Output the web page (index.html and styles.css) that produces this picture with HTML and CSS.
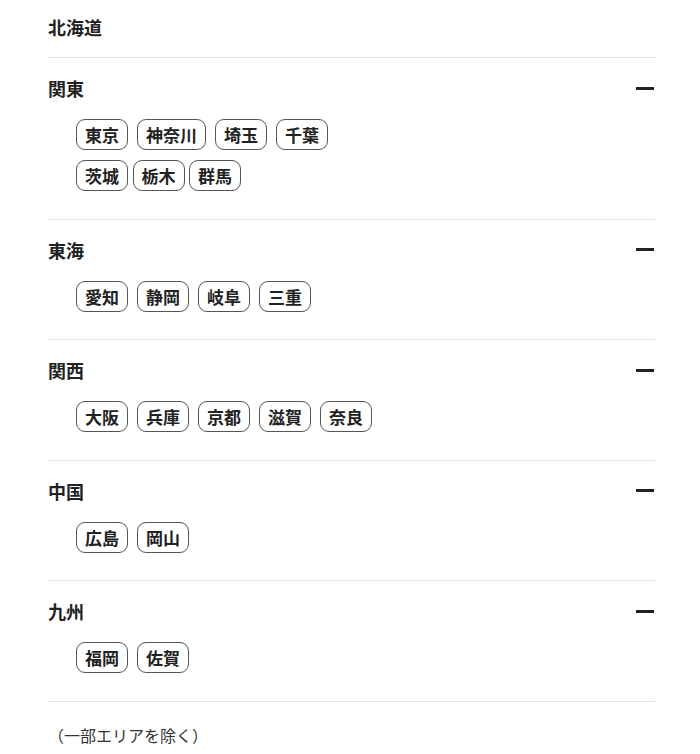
FILE: index.html
```html
<!DOCTYPE html>
<html lang="ja">
<head>
    <meta charset="UTF-8">
    <meta name="viewport" content="width=device-width, initial-scale=1.0">
    <title>対応エリア</title>
    <link rel="stylesheet" href="styles.css">
</head>
<body>
    <div class="area-list">
        <!-- 北海道 has no sub list -->
        <div class="area area-single">
            <div class="area-head">
                <span class="area-name">北海道</span>
            </div>
        </div>

        <div class="area">
            <div class="area-head">
                <span class="area-name">関東</span>
                <span class="toggle"></span>
            </div>
            <div class="prefs">
                <span class="pref">東京</span>
                <span class="pref">神奈川</span>
                <span class="pref">埼玉</span>
                <span class="pref">千葉</span>
            </div>
            <div class="prefs prefs-tight">
                <span class="pref">茨城</span>
                <span class="pref">栃木</span>
                <span class="pref">群馬</span>
            </div>
        </div>

        <div class="area">
            <div class="area-head">
                <span class="area-name">東海</span>
                <span class="toggle"></span>
            </div>
            <div class="prefs">
                <span class="pref">愛知</span>
                <span class="pref">静岡</span>
                <span class="pref">岐阜</span>
                <span class="pref">三重</span>
            </div>
        </div>

        <div class="area">
            <div class="area-head">
                <span class="area-name">関西</span>
                <span class="toggle"></span>
            </div>
            <div class="prefs">
                <span class="pref">大阪</span>
                <span class="pref">兵庫</span>
                <span class="pref">京都</span>
                <span class="pref">滋賀</span>
                <span class="pref">奈良</span>
            </div>
        </div>

        <div class="area">
            <div class="area-head">
                <span class="area-name">中国</span>
                <span class="toggle"></span>
            </div>
            <div class="prefs">
                <span class="pref">広島</span>
                <span class="pref">岡山</span>
            </div>
        </div>

        <div class="area">
            <div class="area-head">
                <span class="area-name">九州</span>
                <span class="toggle"></span>
            </div>
            <div class="prefs">
                <span class="pref">福岡</span>
                <span class="pref">佐賀</span>
            </div>
        </div>

        <p class="note">（一部エリアを除く）</p>
    </div>
</body>
</html>
```

FILE: styles.css
```css
/* Basic page styling */
body {
    margin: 0;
    font-family: "Noto Sans CJK JP", "Noto Sans", sans-serif;
    color: #222;
    background: #fff;
}

.area-list {
    margin: 0 45px 0 48px;
}

/* One region block */
.area {
    padding: 17px 0 27.5px;
    border-bottom: 1px solid #e2e2e2;
}

.area-single {
    padding: 14px 0 17px;
}

.area-head {
    display: flex;
    align-items: center;
    justify-content: space-between;
    height: 26px;
}

.area-name {
    font-size: 18px;
    font-weight: bold;
    line-height: 26px;
}

/* Minus sign for an open region */
.toggle {
    width: 18px;
    height: 3px;
    margin-right: 1px;
    background: #222;
}

/* Prefecture chips */
.prefs {
    display: flex;
    flex-wrap: wrap;
    gap: 9px;
    margin: 18px 0 0 28px;
}

.prefs + .prefs {
    margin-top: 10px;
}

.prefs-tight {
    gap: 4.5px;
}

.pref {
    display: inline-block;
    padding: 4px 8px;
    border: 1px solid #555;
    border-radius: 9px;
    font-size: 17px;
    font-weight: bold;
    line-height: 21px;
}

.note {
    margin: 0;
    padding-top: 21px;
    font-size: 16px;
    line-height: 24px;
    color: #333;
}
```
